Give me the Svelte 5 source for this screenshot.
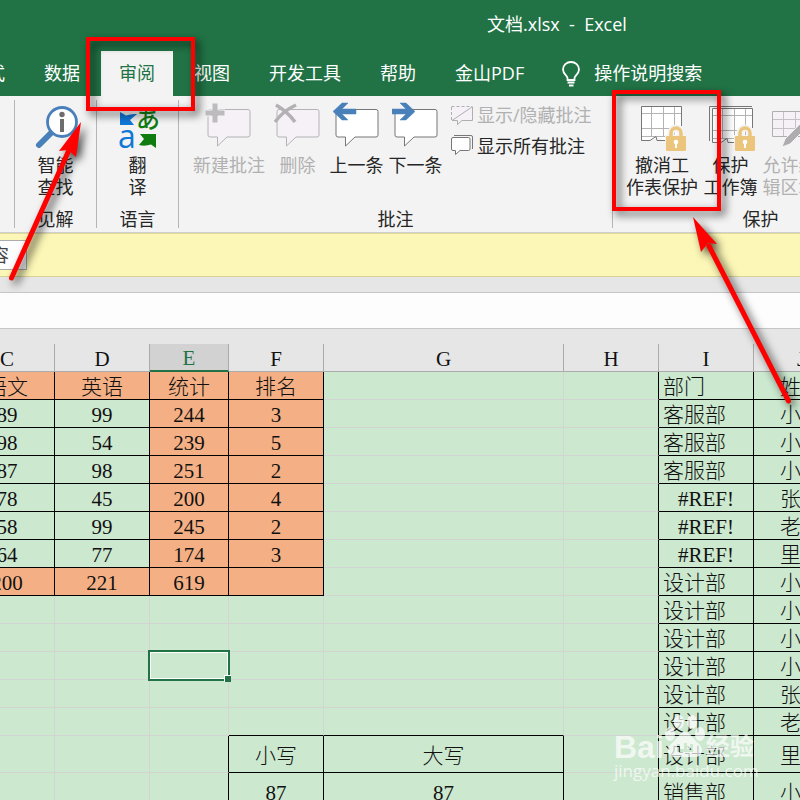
<script lang="ts">
  // Excel window scrolled part-way to the right, with the review tab open
  // and two call-outs drawn over it.
  type Cell = { text: string; cls: string };

  const tabs = ['公式', '数据', '审阅', '视图', '开发工具', '帮助', '金山PDF'];
  let activeTab = $state('审阅');

  const columns = ['C', 'D', 'E', 'F', 'G', 'H', 'I', 'J'];

  const scores = [
    ['语文', '英语', '统计', '排名'],
    ['89', '99', '244', '3'],
    ['98', '54', '239', '5'],
    ['87', '98', '251', '2'],
    ['78', '45', '200', '4'],
    ['58', '99', '245', '2'],
    ['64', '77', '174', '3'],
    ['200', '221', '619', '']
  ];

  const staff = [
    ['部门', '姓名'],
    ['客服部', '小'],
    ['客服部', '小'],
    ['客服部', '小'],
    ['#REF!', '张'],
    ['#REF!', '老'],
    ['#REF!', '里'],
    ['设计部', '小'],
    ['设计部', '小'],
    ['设计部', '小'],
    ['设计部', '小'],
    ['设计部', '张'],
    ['设计部', '老'],
    ['设计部', '里'],
    ['销售部', '小']
  ];

  // row index -> values of F and G
  const amounts: Record<number, string[]> = {
    13: ['小写', '大写'],
    14: ['87', '87']
  };

  function cellAt(r: number, c: number): Cell {
    if (c < 4 && r < scores.length) {
      const filled = c > 1 || r === 0 || r === scores.length - 1;
      return { text: scores[r][c], cls: filled ? 'box fill' : 'box' };
    }
    if (c >= 6) {
      const text = staff[r][c - 6];
      const align = c === 7 ? 'name' : text.startsWith('#') ? '' : 'left';
      return { text, cls: `box ${align}` };
    }
    if (amounts[r] && (c === 3 || c === 4)) {
      return { text: amounts[r][c - 3], cls: 'box' };
    }
    // empty cells only take a dark edge from the block next to them
    let cls = '';
    if (c === 5 || (c === 2 && amounts[r])) cls += ' edge-right';
    if (r === 12 && (c === 3 || c === 4)) cls += ' edge-bottom';
    return { text: '', cls };
  }

  const rows = staff.map((_, r) => columns.map((_, c) => cellAt(r, c)));
  const isSelected = (r: number, c: number) => r === 10 && c === 2;
</script>

{#snippet bubble(fill: string, stroke: string)}
  <path d="M5 7.500H43Q45 7.500 45 9.500V33Q45 35 43 35H22L12.500 44V35H5Q3 35 3 33V9.500Q3 7.500 5 7.500Z" {fill} {stroke} />
{/snippet}

{#snippet lock()}
  <path d="M27 33H48V50H27Z" fill="#f3f3f3" />
  <path d="M33 35V31a5 5 0 0 1 10 0V35" fill="none" stroke="#f3f3f3" stroke-width="7" />
  <path d="M33 35V31a5 5 0 0 1 10 0V35" fill="none" stroke="#ecc57c" stroke-width="3.500" />
  <rect x="28" y="34" width="20" height="15" rx="1" fill="#ecc57c" />
  <circle cx="38" cy="40" r="2.300" fill="#fff" />
  <path d="M37 40h2v6h-2z" fill="#fff" />
{/snippet}

{#snippet sheetGrid()}
  <path d="M3.500 4.500H43.500V38.500H25L20 35.500L12 38.500H3.500Z" fill="#fff" />
  <path d="M13.500 5V35M25.500 5V35M36.500 5V35M4 11.500H43M4 26.500H43M4 34.500H43" stroke="#b3b3b3" fill="none" />
  <path d="M43.500 24V4.500H3.500V38.500H12L18 34.500L19 38.500H27" stroke="#777" fill="none" />
{/snippet}

<div class="window">
  <header>
    <h1>文档.xlsx &nbsp;-&nbsp; Excel</h1>
    <div class="tabs">
      {#each tabs as tab}
        <button type="button" class="tab" class:active={tab === activeTab} onclick={() => (activeTab = tab)}>{tab}</button>
      {/each}
      <button type="button" class="tell-me">
        <svg width="20" height="26" viewBox="0 0 20 26" fill="none" stroke="#fff" stroke-width="1.800">
          <path d="M6.500 19V17C6.500 14.500 2 13 2 8.500a8 7.500 0 0 1 16 0C18 13 13.500 14.500 13.500 17V19Z" />
          <path d="M6.500 21.500H13.500M8 24.500H12.500" />
        </svg>
        <span>操作说明搜索</span>
      </button>
    </div>
  </header>

  <div class="ribbon">
    <section class="group insight">
      <div class="tools">
        <button type="button" class="tool">
          <svg width="48" height="50" viewBox="0 0 48 50">
            <path d="M19 31L7 43" stroke="#4a80ba" stroke-width="6" stroke-linecap="round" />
            <circle cx="30" cy="20" r="14.500" fill="#fff" stroke="#4a80ba" stroke-width="2.800" />
            <circle cx="30" cy="12.500" r="2.700" fill="#6d6d6d" />
            <rect x="28" y="17" width="4" height="13" fill="#6d6d6d" />
          </svg>
          <span>智能</span><span>查找</span>
        </button>
      </div>
      <h2>见解</h2>
    </section>

    <section class="group insight">
      <div class="tools">
        <button type="button" class="tool">
          <svg width="48" height="50" viewBox="0 0 48 50">
            <path d="M6 10L12 13.500Q17 11.500 23 12L16 18L20 23H6Z" fill="#0f78d7" />
            <path d="M26 32H42V46L37 42.500Q31 44.500 25 43L30 37Z" fill="#107c10" />
            <text class="kana" x="22" y="26">あ</text>
            <text class="latin" x="4" y="46">a</text>
          </svg>
          <span>翻</span><span>译</span>
        </button>
      </div>
      <h2>语言</h2>
    </section>

    <section class="group comments">
      <div class="tools">
        <button type="button" class="tool wide" disabled>
          <svg width="48" height="50" viewBox="0 0 48 50">
            {@render bubble('#f5f1f7', '#b5b3b6')}
            <path d="M7 1h6v7h7v6h-7v7H7v-7H0V8h7z" fill="#bdbbbe" stroke="#f3f3f3" stroke-width="1" />
          </svg>
          <span>新建批注</span>
        </button>
        <button type="button" class="tool mid" disabled>
          <svg width="48" height="50" viewBox="0 0 48 50">
            {@render bubble('#f5f1f7', '#b5b3b6')}
            <path d="M2 3Q14 10 21 20M22 3Q9 9 1 20" stroke="#b3b1b4" stroke-width="3.500" fill="none" />
          </svg>
          <span>删除</span>
        </button>
        <button type="button" class="tool">
          <svg width="48" height="50" viewBox="0 0 48 50">
            {@render bubble('#fff', '#777')}
            <path d="M0 9.500L9 1h6l-6 6h14v5H9l6 6H9z" fill="#4a80ba" stroke="#4a80ba" stroke-width="0.500" />
          </svg>
          <span>上一条</span>
        </button>
        <button type="button" class="tool">
          <svg width="48" height="50" viewBox="0 0 48 50">
            {@render bubble('#fff', '#777')}
            <path d="M23 9.500L14 1H8l6 6H0v5h14l-6 6h6z" fill="#4a80ba" stroke="#4a80ba" stroke-width="0.500" />
          </svg>
          <span>下一条</span>
        </button>
        <div class="stack">
          <button type="button" class="row-tool" disabled>
            <svg width="22" height="22" viewBox="0 0 22 22" fill="none" stroke="#b0aeb1">
              <path d="M.5 2.500H21.500V16.500H11L6.500 20.500V16.500H.5Z" fill="#f5f1f7" stroke="none" />
              <path d="M.5 2.500H21.500" stroke-dasharray="3 2" />
              <path d="M.5 3V16" stroke-dasharray="3 2" />
              <path d="M21.500 3V16.500H11L6.500 20.500V16.500H1L21 3" />
            </svg>
            <span>显示/隐藏批注</span>
          </button>
          <button type="button" class="row-tool">
            <svg width="22" height="22" viewBox="0 0 22 22" fill="#fff" stroke="#777">
              <path d="M3 .5H20Q21.500 .5 21.500 2V14" fill="none" />
              <path d="M2 2.500H17.500Q19 2.500 19 4V14Q19 15.500 17.500 15.500H9L4.500 19.500V15.500H2Q.5 15.500 .5 14V4Q.5 2.500 2 2.500Z" />
            </svg>
            <span>显示所有批注</span>
          </button>
        </div>
      </div>
      <h2>批注</h2>
    </section>

    <section class="group protect">
      <div class="tools">
        <button type="button" class="tool wide">
          <svg width="48" height="50" viewBox="0 0 48 50">
            {@render sheetGrid()}
            {@render lock()}
          </svg>
          <span>撤消工</span><span>作表保护</span>
        </button>
        <button type="button" class="tool">
          <svg width="48" height="50" viewBox="0 0 48 50">
            <path d="M2.500 39V4.500H45" stroke="#777" fill="none" />
            <g transform="translate(2 2)">{@render sheetGrid()}</g>
            {@render lock()}
          </svg>
          <span>保护</span><span>工作簿</span>
        </button>
        <button type="button" class="tool" disabled>
          <svg width="48" height="50" viewBox="0 0 48 50">
            <path d="M6.500 9.500H47V34.500H6.500Z" fill="#f5f1f7" stroke="#b0aeb1" />
            <path d="M17.500 10V34M29.500 10V34M41.500 10V34M7 17.500H47M7 26.500H47" stroke="#c4c2c5" />
            <path d="M16 45L19 37L39 17L44 22L24 42Z" fill="#aeacaf" stroke="#f3f3f3" stroke-width="1" />
          </svg>
          <span>允许编</span><span>辑区域</span>
        </button>
      </div>
      <h2>保护</h2>
    </section>
  </div>

  <div class="notice">
    <button type="button">启用内容</button>
  </div>

  <div class="formula">
    <input type="text" aria-label="编辑栏" />
  </div>

  <table>
    <colgroup>
      {#each columns as col}
        <col class={`col-${col.toLowerCase()}`} />
      {/each}
    </colgroup>
    <thead>
      <tr>
        {#each columns as col}
          <th scope="col" class:current={col === 'E'}>{col}</th>
        {/each}
      </tr>
    </thead>
    <tbody>
      {#each rows as row, r}
        <tr class:tall={r > 12}>
          {#each row as cell, c}
            <td class={cell.cls} class:selected={isSelected(r, c)}>
              {cell.text}
              {#if isSelected(r, c)}
                <span class="cursor"><i></i></span>
              {/if}
            </td>
          {/each}
        </tr>
      {/each}
    </tbody>
  </table>

  <!-- call-outs over the window -->
  <div class="frame frame-tab"></div>
  <div class="frame frame-protect"></div>
  <svg class="arrows" width="800" height="420" viewBox="0 0 800 420">
    <g fill="#f00" stroke="#f00">
      <path d="M11.500 278L69 150" stroke-width="5" stroke-linecap="round" />
      <path d="M81 122L76 157L68 150L59 151Z" stroke="none" />
      <path d="M788.500 401L709 246" stroke-width="5" stroke-linecap="round" />
      <path d="M693 217L717 244L708 243L701 252Z" stroke="none" />
    </g>
  </svg>

  <div class="watermark">
    <div class="brand">
      <span class="bai">Bai</span>
      <svg width="42" height="46" viewBox="0 0 42 46" fill="currentColor">
        <ellipse cx="6" cy="20" rx="5" ry="7" />
        <ellipse cx="15" cy="8" rx="5" ry="7" />
        <ellipse cx="28" cy="8" rx="5" ry="7" />
        <ellipse cx="36" cy="20" rx="5" ry="7" />
        <path fill-rule="evenodd" d="M21 18C26 18 29 25 34 29C41 35 38 43 31 43H11C4 43 1 35 8 29C13 25 16 18 21 18ZM13 30V38H29V30H26V35H23V29H20V35H16V30Z" />
      </svg>
      <span class="jy">经验</span>
    </div>
    <span class="site">jingyan.baidu.com</span>
  </div>
</div>

<style>
  :global(body) {
    margin: 0;
  }
  .window {
    position: relative;
    height: 100vh;
    overflow: hidden;
    background: #e6e6e6;
    font-family: 'Open Sans', 'Noto Sans CJK SC', sans-serif;
    font-size: 18px;
    color: #262626;
  }
  button {
    margin: 0;
    padding: 0;
    border: 0;
    background: none;
    color: inherit;
    font: inherit;
    white-space: nowrap;
    cursor: pointer;
  }
  button:disabled {
    color: #b1b1b1;
    cursor: default;
  }
  h1,
  h2 {
    margin: 0;
    font-size: 18px;
    font-weight: 400;
  }

  header {
    background: #217346;
    color: #fff;
  }
  h1 {
    padding: 0 0 3px 487px;
    line-height: 48px;
    white-space: nowrap;
  }
  .tabs {
    display: flex;
    gap: 3px;
    height: 45px;
    margin-left: -49px;
  }
  .tab {
    flex: none;
    padding: 0 18px;
    line-height: 45px;
  }
  .tab.active {
    background: #f3f3f3;
    color: #217346;
  }
  .tell-me {
    display: flex;
    align-items: center;
    gap: 13px;
    padding-left: 16px;
    line-height: 45px;
  }

  .ribbon {
    display: flex;
    height: 137px;
    padding-left: 14px;
    border-bottom: 1px solid #cfcfcf;
    box-sizing: border-box;
    overflow: hidden;
    background: #f3f3f3;
  }
  .group {
    display: flex;
    flex: none;
    flex-direction: column;
    justify-content: space-between;
    box-sizing: border-box;
    margin: 4px 0;
    border-left: 1px solid #b5b5b5;
  }
  .group h2 {
    line-height: 18px;
    text-align: center;
  }
  .insight {
    width: 82px;
  }
  .insight .tools {
    justify-content: center;
  }
  .comments {
    width: 434px;
    padding-left: 12px;
  }
  .comments h2 {
    margin-left: -12px;
  }
  .protect {
    width: 296px;
    padding-left: 11px;
  }
  .protect h2 {
    margin-left: -11px;
  }
  .tools {
    display: flex;
    gap: 2px;
    padding-top: 2px;
  }
  .tool {
    display: flex;
    flex-direction: column;
    align-items: center;
    width: 57px;
    line-height: 22px;
  }
  .tool svg {
    margin-bottom: 2px;
  }
  .tool.wide {
    width: 76px;
  }
  .kana {
    font-family: 'Noto Sans CJK JP', sans-serif;
    font-size: 24px;
    font-weight: 500;
    fill: #107c10;
  }
  .latin {
    font-size: 32px;
    font-weight: 500;
    fill: #0f78d7;
  }
  .stack {
    display: flex;
    flex-direction: column;
    gap: 9px;
    padding: 2px 0 0 5px;
  }
  .row-tool {
    display: flex;
    align-items: center;
    gap: 4px;
    line-height: 22px;
  }

  .notice {
    height: 44px;
    padding-top: 6px;
    box-sizing: border-box;
    border-top: 1px solid #e0da9c;
    border-bottom: 1px solid #d8d294;
    background: #fcf7b6;
  }
  .notice button {
    height: 30px;
    margin-left: -81px;
    padding: 0 17px;
    border: 1px solid #ababab;
    background: #fdfdfd;
    color: #444;
    line-height: 26px;
  }

  .formula {
    padding: 15px 0;
  }
  .formula input {
    display: block;
    width: 100%;
    height: 37px;
    padding: 0 8px;
    box-sizing: border-box;
    border: solid #c6c6c6;
    border-width: 1px 0;
    border-radius: 0;
    background: #fdfdfd;
    font: inherit;
  }

  table {
    width: 889px;
    margin-left: -40px;
    table-layout: fixed;
    border-collapse: separate;
    border-spacing: 0;
    background: #cce8cf;
    color: #111;
    font-family: 'Liberation Serif', 'Noto Sans CJK SC', serif;
    font-size: 21px;
    line-height: 24px;
  }
  col {
    width: 95px;
  }
  .col-e {
    width: 79px;
  }
  .col-g {
    width: 240px;
  }
  th,
  td {
    box-sizing: border-box;
    height: 28px;
    padding: 3px 0 0;
    border: solid #d4d4d4;
    border-width: 0 1px 1px 0;
    text-align: center;
    white-space: nowrap;
    font-weight: 300;
  }
  th {
    border-color: #ababab;
    background: #e6e6e6;
    font-weight: 400;
  }
  th.current {
    padding-top: 2px;
    border-bottom: 2px solid #217346;
    background: #d2d2d2;
    color: #217346;
  }
  .tall td {
    height: 37px;
  }
  td.box {
    border-color: #000;
  }
  td.fill {
    background: #f4b084;
  }
  td.left {
    padding-left: 4px;
    text-align: left;
  }
  td.name {
    padding-left: 26px;
    text-align: left;
  }
  td.edge-right {
    border-right-color: #000;
  }
  td.edge-bottom {
    border-bottom-color: #000;
  }
  td.selected {
    position: relative;
  }
  .cursor {
    position: absolute;
    inset: -2px;
    border: 2px solid #217346;
    box-shadow: inset 0 0 0 1px #fff;
  }
  .cursor i {
    position: absolute;
    right: -3px;
    bottom: -3px;
    width: 6px;
    height: 6px;
    border: solid #fff;
    border-width: 1px 0 0 1px;
    background: #217346;
  }

  .frame {
    position: absolute;
    box-sizing: border-box;
    border: 4px solid #f00;
    filter: drop-shadow(4px 4px 4px rgba(0, 0, 0, 0.7));
    pointer-events: none;
  }
  .frame-tab {
    left: 86px;
    top: 37px;
    width: 109px;
    height: 74px;
  }
  .frame-protect {
    left: 612px;
    top: 90px;
    width: 109px;
    height: 121px;
  }
  .arrows {
    position: absolute;
    left: 0;
    top: 0;
    filter: drop-shadow(4px 4px 4px rgba(0, 0, 0, 0.7));
    pointer-events: none;
  }

  .watermark {
    position: absolute;
    left: 614px;
    top: 714px;
    color: rgba(255, 255, 255, 0.7);
    pointer-events: none;
  }
  .brand {
    display: flex;
    align-items: flex-end;
    height: 46px;
  }
  .bai {
    font-family: 'Liberation Sans', sans-serif;
    font-size: 32px;
    font-weight: 700;
    line-height: 26px;
  }
  .jy {
    font-size: 24px;
    font-weight: 700;
    line-height: 28px;
  }
  .site {
    display: block;
    font-size: 17px;
    line-height: 22px;
  }
</style>
